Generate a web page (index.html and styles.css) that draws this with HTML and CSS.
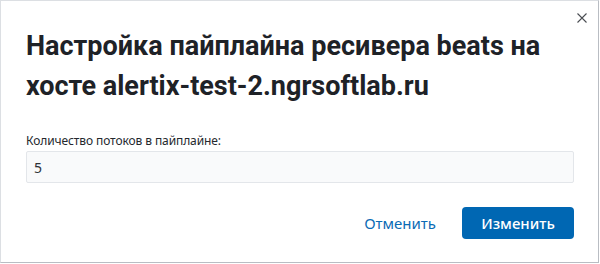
FILE: index.html
```html
<html>

<head>
    <title>Настройка пайплайна</title>
    <link rel="stylesheet" href="styles.css">
</head>

<body class="body">
    <div class="modal">
        <button class="closeButton" title="Закрыть">
            <svg width="10" height="10" viewBox="0 0 10 10">
                <path d="M0.5 0.5 L9.5 9.5 M9.5 0.5 L0.5 9.5" stroke="#4a4d52" stroke-width="1.1" fill="none" />
            </svg>
        </button>
        <h1 class="modalTitle">Настройка пайплайна ресивера beats на хосте alertix-test-2.ngrsoftlab.ru</h1>
        <div class="field">
            <label class="fieldLabel" for="workers">Количество потоков в пайплайне:</label>
            <input type="text" id="workers" class="fieldInput" value="5">
        </div>
        <div class="modalFooter">
            <button class="cancelButton">Отменить</button>
            <button class="submitButton">Изменить</button>
        </div>
    </div>
</body>

</html>
```

FILE: styles.css
```css
.body {
    margin: 0;
    background-color: #ffffff;
    font-family: "Noto Sans", "Open Sans", sans-serif;
}

.modal {
    position: relative;
    box-sizing: border-box;
    width: 599px;
    height: 263px;
    padding: 25px 24px 24px 25px;
    border: 1px solid #dcdfe3;
    border-right-color: #b9bdc3;
    border-bottom-color: #b9bdc3;
    background-color: #ffffff;
}

.closeButton {
    position: absolute;
    top: 11px;
    right: 10px;
    width: 12px;
    height: 12px;
    padding: 1px;
    border: none;
    background: none;
    display: flex;
}

.modalTitle {
    margin: 0;
    width: 545px;
    font-family: Roboto, "Noto Sans", sans-serif;
    font-size: 27px;
    line-height: 40px;
    font-weight: 700;
    letter-spacing: 0;
    color: #1e2227;
}

.field {
    margin-top: 27px;
}

.fieldLabel {
    display: block;
    font-size: 12px;
    line-height: 16px;
    letter-spacing: -0.1px;
    color: #25292e;
    margin-bottom: 2px;
}

.fieldInput {
    box-sizing: border-box;
    width: 100%;
    height: 32px;
    padding: 0 7px;
    border: 1px solid #e3e6ea;
    border-radius: 2px;
    background-color: #f9fafb;
    font-family: inherit;
    font-size: 14px;
    color: #2e3237;
    outline: none;
}

.modalFooter {
    display: flex;
    justify-content: flex-end;
    align-items: center;
    gap: 10px;
    margin-top: 24px;
}

.cancelButton {
    height: 32px;
    padding: 0 16px;
    border: none;
    background: none;
    font-family: inherit;
    font-size: 15px;
    color: #0b6bb5;
}

.submitButton {
    width: 112px;
    height: 32px;
    border: none;
    border-radius: 4px;
    background-color: #0067b3;
    font-family: inherit;
    font-size: 15px;
    font-weight: 500;
    color: #ffffff;
}
```
